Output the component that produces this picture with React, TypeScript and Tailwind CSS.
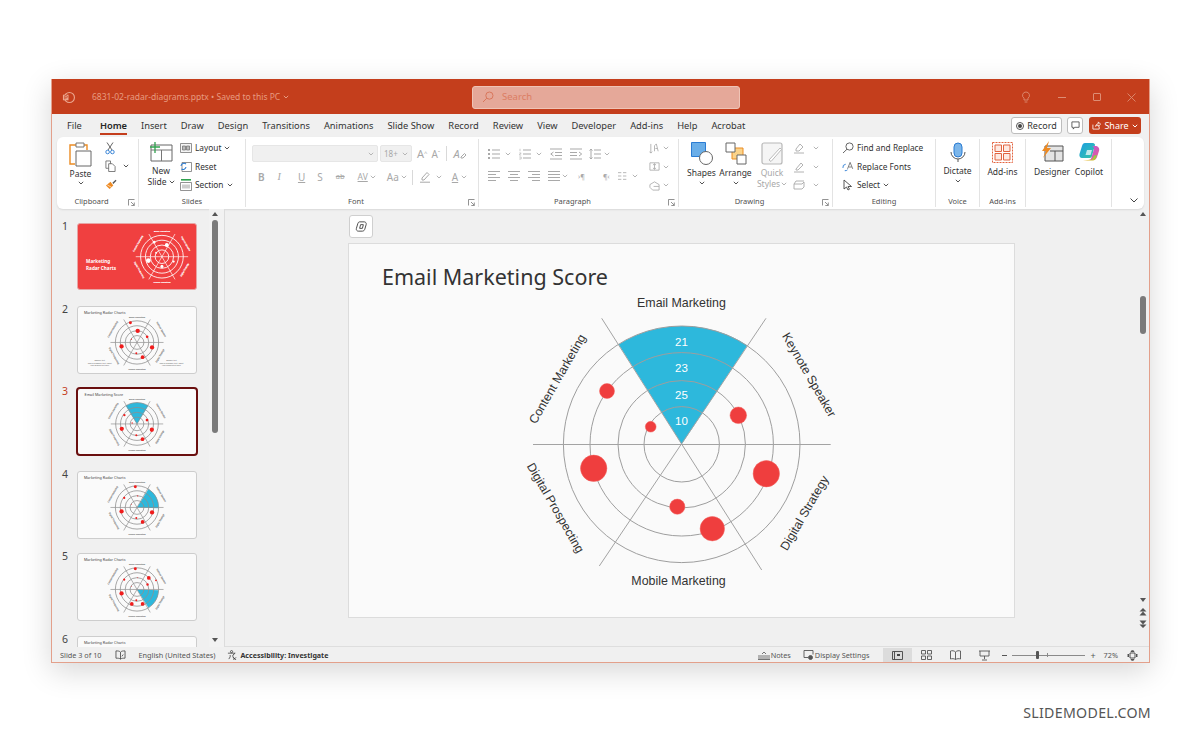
import React from "react";

const UI = "[font-family:'Noto_Sans','Open_Sans',sans-serif]";

function Chev({ className = "", color = "#555" }: { className?: string; color?: string }) {
  return (
    <svg viewBox="0 0 6 4" className={`w-[6px] h-[4px] shrink-0 ${className}`} fill="none" stroke={color} strokeWidth="1">
      <path d="M.8.8 3 3 5.2.8" />
    </svg>
  );
}

const G = "#a9a9a9";

function Lines({ kind, className = "" }: { kind: string; className?: string }) {
  const rows: Record<string, string> = {
    bullets: "M4 2h8M4 6h8M4 10h8",
    numbers: "M4 2h8M4 6h8M4 10h8",
    outdent: "M0 1h12M5 4.5h7M5 7.5h7M0 11h12M3.5 4 .8 6l2.7 2",
    indent: "M0 1h12M0 4.5h7M0 7.5h7M0 11h12M9 4l2.7 2L9 8",
    spacing: "M5 2h7M5 6h7M5 10h7M2 1v10M.6 2.6 2 1l1.4 1.6M.6 9.4 2 11l1.4-1.6",
    left: "M0 1.5h12M0 4.5h8M0 7.5h12M0 10.5h8",
    center: "M0 1.5h12M2 4.5h8M0 7.5h12M2 10.5h8",
    right: "M0 1.5h12M4 4.5h8M0 7.5h12M4 10.5h8",
    justify: "M0 1.5h12M0 4.5h12M0 7.5h12M0 10.5h12",
    cols: "M0 2h4M0 6h4M0 10h4M6 2h4M6 6h4M6 10h4",
  };
  return (
    <svg viewBox="0 0 12 12" className={`w-[12px] h-[12px] shrink-0 ${className}`} fill="none" stroke={G} strokeWidth="1">
      <path d={rows[kind]} />
      {kind === "bullets" && <path d="M0 1h2v2H0zM0 5h2v2H0zM0 9h2v2H0z" fill={G} stroke="none" />}
      {kind === "numbers" && <path d="M1 .8v2.4M.2 5h2L.2 7h2M.2 9h2v2H.2" strokeWidth=".6" />}
    </svg>
  );
}

function Group({ label, w, launcher, children, last }: { label: string; w: string; launcher?: boolean; children: React.ReactNode; last?: boolean }) {
  return (
    <div className={`flex flex-col my-[2px] ${w} ${last ? "" : "border-r border-[#e3e3e3]"}`}>
      <div className="flex-1 flex min-h-0">{children}</div>
      <div className={`h-[10px] flex items-center relative ${launcher ? "pr-[12px]" : ""}`}>
        <span className="flex-1 text-center text-[7.5px] leading-none text-[#505050]">{label}</span>
        {launcher && (
          <svg viewBox="0 0 7 7" className="w-[7px] h-[7px] absolute right-[3px] top-[2px]" fill="none" stroke="#777" strokeWidth=".8">
            <path d="M.5 6.5V.5h6M3 3l3.3 3.3M6.3 3.5v3H3.3" />
          </svg>
        )}
      </div>
    </div>
  );
}

function BigLabel({ children, gray }: { children: React.ReactNode; gray?: boolean }) {
  return <div className={`text-[8.5px] leading-[11px] text-center whitespace-nowrap ${gray ? "text-[#a8a8a8]" : "text-[#333]"}`}>{children}</div>;
}

function SmallRow({ icon, text, chev }: { icon: React.ReactNode; text: string; chev?: boolean }) {
  return (
    <div className="h-[18.5px] flex items-center gap-[3px] text-[8.3px] text-[#333] whitespace-nowrap">
      <span className="w-[12px] h-[12px] flex items-center justify-center shrink-0">{icon}</span>
      <span>{text}</span>
      {chev && <Chev />}
    </div>
  );
}

function Radar({ wedge, dots, mono, title, notes, cut }: { wedge?: "top" | "ur" | "lr"; dots: number[][]; mono?: boolean; title?: string; notes?: boolean; cut?: boolean }) {
  const cx = mono ? 85.7 : 60;
  const cy = mono ? 33.7 : 36;
  const line = mono ? "#fff" : "#8f8f8f";
  const dot = mono ? "#fff" : "#f01c1c";
  const P = (a: number, r: number) => `${cx + r * Math.cos((a * Math.PI) / 180)} ${cy + r * Math.sin((a * Math.PI) / 180)}`;
  const angles = wedge === "top" ? [-122, -58] : wedge === "ur" ? [-58, 2] : [2, 58];
  const labels = cut
    ? []
    : [
        { t: "Email Marketing", x: 0, y: -25, r: 0 },
        { t: "Mobile Marketing", x: 0, y: 27.5, r: 0 },
        { t: "Content Marketing", x: -24, y: -13, r: -60 },
        { t: "Keynote Speaker", x: 24, y: -13, r: 60 },
        { t: "Digital Prospecting", x: -24, y: 14, r: 60 },
        { t: "Digital Strategy", x: 24, y: 14, r: -60 },
      ];
  return (
    <svg viewBox="0 0 120 67" className="w-full h-full block">
      {title && <text x="6" y="7" fontSize="3.8" fill="#444" fontFamily="'Noto Sans',sans-serif">{title}</text>}
      {wedge && <path d={`M${cx} ${cy}L${P(angles[0], 22)}A22 22 0 0 1 ${P(angles[1], 22)}Z`} fill="#2db8dc" />}
      {[7, 12, 17, 22].map((r) => (
        <circle key={r} cx={cx} cy={cy} r={r} fill="none" stroke={line} strokeWidth={mono ? 0.9 : 0.8} />
      ))}
      {[0, 60, 120].map((a) => (
        <path key={a} d={`M${P(a, 27)}L${P(a + 180, 27)}`} stroke={line} strokeWidth=".7" />
      ))}
      {dots.map((d, i) => (
        <circle key={i} cx={cx + d[0]} cy={cy + d[1]} r={d[2]} fill={dot} />
      ))}
      {labels.map((l) => (
        <text key={l.t} transform={`translate(${cx + l.x} ${cy + l.y}) rotate(${l.r})`} textAnchor="middle" fontSize="2.3" fill={mono ? "#fff" : "#666"} stroke={mono ? "#fff" : "#999"} strokeWidth=".15" fontFamily="'Liberation Sans',sans-serif">
          {l.t}
        </text>
      ))}
      {notes && (
        <g fill="#555" fontFamily="'Liberation Sans',sans-serif" textAnchor="middle" fontSize="2">
          <text x="22" y="54.500">Sample text</text>
          <text x="22" y="57.500">This is a sample text. Insert</text>
          <text x="22" y="60">your desired text here</text>
          <text x="95" y="54.500">Sample text</text>
          <text x="95" y="57.500">This is a sample text. Insert</text>
          <text x="95" y="60">your desired text here</text>
        </g>
      )}
      {mono && (
        <g fill="#fff" fontFamily="'Noto Sans',sans-serif" fontWeight="700" fontSize="4.8">
          <text x="7.500" y="40.500">Marketing</text>
          <text x="7.500" y="47">Radar Charts</text>
        </g>
      )}
    </svg>
  );
}

const baseDots = [[-6.7, -20, 1.5], [0.7, -11.7, 2.2], [10.3, -5.7, 1.3], [-5.7, -3.3, 0.6], [-15.7, 4, 2.2], [15.3, 5, 2.2], [-0.7, 11, 1], [5.7, 15, 1.9]];
const d3 = [[-13, -9, 1.2], [10.3, -4, 1.4], [-5, -1, 0.7], [-15.7, 5, 2.2], [15.3, 6, 2.2], [-0.7, 11.7, 1], [5.7, 15.7, 1.9]];
const d4 = [[-1.7, -21, 1.5], [0.7, -11.7, 0.6], [-13, -9.7, 1.1], [-5.7, -3.3, 0.5], [-15.7, 4, 2.2], [15.3, 5, 2.2], [-0.7, 10.7, 1], [5.7, 14.7, 1.9]];
const d5 = [[-1.7, -21, 1.5], [12, -11.7, 1.9], [19.3, -9.3, 0.9], [10.7, -5, 1.2], [0.7, -12, 0.5], [-13, -10, 1.1], [-5.7, -3.3, 0.5], [-15.7, 4, 2.2], [-5.3, 14.7, 1.9], [-0.7, 11, 1], [5.7, 14.7, 1.9]];
const d1 = [[-8, -15, 1.4], [5, -12, 2], [-6, -4, 1], [-14, 4, 2.4], [12, 5, 1.2], [0, 10, 1.6]];

function Thumb({ n, active, red, children }: { n: number; active?: boolean; red?: boolean; children: React.ReactNode }) {
  return (
    <div className="flex h-[67px] shrink-0">
      <div className={`w-[25px] pl-[10px] text-[10.5px] leading-[7px] ${active ? "text-[#c43e1c]" : "text-[#444]"}`}>
        <div>{n}</div>
      </div>
      <div
        className={`overflow-hidden ${active ? "ml-[-1px] w-[122px] h-[69px] mt-[-1px] rounded-[4px] border-2 border-[#6a0f0f] bg-[#fafafa]" : red ? "w-[120px] h-[67px] rounded-[3px] border border-[#e7a5a5] bg-[#f04040]" : "w-[120px] h-[68px] rounded-[3px] border-[1.5px] border-[#cdcdcd] bg-[#fafafa]"}`}
      >
        {children}
      </div>
    </div>
  );
}

function ChartBig() {
  const dots = [
    [607, 391, 7.5], [650.7, 426.7, 5.4], [738.3, 415.3, 8.3], [593.7, 468.3, 13.2],
    [766.3, 473.7, 13.2], [677.3, 506.7, 7.6], [712.3, 528.7, 12.2],
  ];
  const label = "'Liberation Sans',sans-serif";
  return (
    <svg viewBox="515 292 335 300" className="block w-[335px] h-[300px] ml-[166px] shrink-0">
      <path d="M681.7 444.3 618.6 344.5A118.3 118.3 0 0 1 747.4 345.5Z" fill="#2db8dc" />
      {[37.7, 63.7, 91.7, 118.3].map((r) => (
        <circle key={r} cx="681.7" cy="444.3" r={r} fill="none" stroke="#9e9e9e" strokeWidth="1" />
      ))}
      <path d="M533 444.5H830.7M601.7 318.3 761.7 570M766 318.3 599.3 566" stroke="#a3a3a3" strokeWidth="1" />
      {dots.map((d, i) => (
        <circle key={i} cx={d[0]} cy={d[1]} r={d[2]} fill="#ef3e3e" stroke="#f2625f" strokeWidth=".5" />
      ))}
      <g fontFamily={label} fontSize="11.5" fill="#fff" textAnchor="middle">
        <text x="681.5" y="346">21</text>
        <text x="681.5" y="372">23</text>
        <text x="681.5" y="399">25</text>
        <text x="681.5" y="425">10</text>
      </g>
      <g fontFamily={label} fontSize="12.4" fill="#333" textAnchor="middle">
        <text x="681.5" y="307">Email Marketing</text>
        <text x="678.5" y="584.5">Mobile Marketing</text>
        <text transform="translate(561 381) rotate(-60)">Content Marketing</text>
        <text transform="translate(805.5 377) rotate(60)">Keynote Speaker</text>
        <text transform="translate(552 510) rotate(60)" fontSize="12.2">Digital Prospecting</text>
        <text transform="translate(808 515) rotate(-60)">Digital Strategy</text>
      </g>
    </svg>
  );
}

const tabs = ["File", "Home", "Insert", "Draw", "Design", "Transitions", "Animations", "Slide Show", "Record", "Review", "View", "Developer", "Add-ins", "Help", "Acrobat"];

export default function App() {
  return (
    <div className={`w-[1200px] h-[743px] bg-white overflow-hidden pt-[79px] pl-[51px] ${UI}`}>
      <div className="w-[1099px] h-[584px] flex flex-col border border-t-0 border-[#e3a08b] shadow-[0_8px_28px_rgba(0,0,0,0.16)] bg-[#f0f0f0]">
        {/* Title bar */}
        <div className="h-[35px] pt-[1px] bg-[#c43e1c] flex items-center shrink-0">
          <svg viewBox="0 0 14 14" className="w-[13px] h-[13px] ml-[10px]" fill="none" stroke="#eba78f" strokeWidth="1.2">
            <circle cx="8" cy="7" r="5.4" />
            <path d="M1 4h6v6H1z" fill="#eba78f" stroke="none" />
            <path d="M3 9V5h1.6a1.2 1.2 0 0 1 0 2.4H3" stroke="#c43e1c" strokeWidth=".8" />
          </svg>
          <div className="ml-[17px] w-[380px] flex items-center text-[8.5px] text-[#e79b80] whitespace-nowrap gap-[3px]">
            <span>6831-02-radar-diagrams.pptx • Saved to this PC</span>
            <Chev color="#e79b80" />
          </div>
          <div className="w-[268px] h-[23px] rounded-[3px] border border-[#efc4b6] bg-[#e5a899] flex items-center pl-[9px] gap-[8px] text-[9.5px] text-[#dc7d63]">
            <svg viewBox="0 0 12 12" className="w-[12px] h-[12px]" fill="none" stroke="#d9775c" strokeWidth="1">
              <circle cx="7.4" cy="4.6" r="3.6" />
              <path d="M4.8 7.2 1 11" />
            </svg>
            <span>Search</span>
          </div>
          <svg viewBox="0 0 10 12" className="w-[10px] h-[12px] ml-[281px]" fill="none" stroke="#dd8d74" strokeWidth=".9">
            <path d="M5 1a3.4 3.4 0 0 0-2 6.2V9h4V7.2A3.4 3.4 0 0 0 5 1zM3.6 11h2.800" />
          </svg>
          <div className="w-[8px] h-px bg-[#dd8d74] ml-[27px]" />
          <div className="w-[8px] h-[8px] rounded-[1px] border border-[#dd8d74] ml-[27px]" />
          <svg viewBox="0 0 9 9" className="w-[9px] h-[9px] ml-[26px]" stroke="#dd8d74" strokeWidth=".9">
            <path d="M.5.5l8 8M8.5.5l-8 8" />
          </svg>
        </div>

        {/* Tabs */}
        <div className="h-[23px] flex items-center shrink-0 pl-[15px] text-[9.3px] text-[#333] relative">
          <div className="flex gap-[14px] whitespace-nowrap">
            {tabs.map((t) =>
              t === "Home" ? (
                <span key={t} className="relative ml-[4px] font-semibold text-[#262626]">
                  {t}
                  <span className="absolute left-0 right-0 bottom-[-3px] h-[2px] bg-[#c43e1c]" />
                </span>
              ) : (
                <span key={t}>{t}</span>
              ),
            )}
          </div>
          <div className="ml-auto flex items-center mr-[8px]">
            <div className="w-[51px] h-[17px] rounded-[3px] border border-[#bdbdbd] bg-white flex items-center justify-center gap-[3px] text-[9px]">
              <span className="w-[8px] h-[8px] rounded-full border border-[#555] flex items-center justify-center">
                <span className="w-[4px] h-[4px] rounded-full bg-[#444]" />
              </span>
              Record
            </div>
            <div className="w-[16px] h-[17px] ml-[5px] rounded-[3px] border border-[#bdbdbd] bg-white flex items-center justify-center">
              <svg viewBox="0 0 10 10" className="w-[9px] h-[9px]" fill="none" stroke="#444" strokeWidth=".9">
                <path d="M1 1h8v6H4L2.5 9V7H1z" />
              </svg>
            </div>
            <div className="w-[52px] h-[17px] ml-[6px] rounded-[3px] bg-[#c43e1c] flex items-center justify-center gap-[3px] text-[9px] text-white">
              <svg viewBox="0 0 10 10" className="w-[9px] h-[9px]" fill="none" stroke="#fff" strokeWidth=".9">
                <path d="M1 4v5h7V6M4 6c0-2 2-3 3-3V1l2.6 2.6L7 6V4.5C6 4.5 4.8 5 4 6z" />
              </svg>
              Share
              <Chev color="#fff" />
            </div>
          </div>
        </div>

        {/* Ribbon */}
        <div className="h-[72px] mx-[5px] rounded-[6px] bg-white flex shrink-0 shadow-[0_1px_2px_rgba(0,0,0,0.1)]">
          <Group label="Clipboard" w="w-[82px]" launcher>
            <div className="ml-[11px] w-[25px] flex flex-col items-center pt-[3px]">
              <svg viewBox="0 0 25 25" className="w-[25px] h-[25px]" fill="none">
                <path d="M10 3H2v19h5" stroke="#eb8c23" strokeWidth="1.4" />
                <path d="M14 3h5v5" stroke="#eb8c23" strokeWidth="1.4" />
                <path d="M8 1h8v4H8z" fill="#fff" stroke="#777" />
                <path d="M8 9h15v15H8z" fill="#fff" stroke="#666" />
              </svg>
              <div className="mt-[1px]"><BigLabel>Paste</BigLabel></div>
              <Chev className="mt-[2px]" />
            </div>
            <div className="ml-[12px] flex flex-col">
              <div className="h-[18px] flex items-center">
                <svg viewBox="0 0 10 13" className="w-[10px] h-[13px]" fill="none" stroke="#555" strokeWidth=".9">
                  <path d="M2 .5 7 8M8 .5 3 8" />
                  <circle cx="2.6" cy="10" r="1.8" stroke="#2b7cd3" />
                  <circle cx="7.4" cy="10" r="1.8" stroke="#2b7cd3" />
                </svg>
              </div>
              <div className="h-[18px] flex items-center">
                <svg viewBox="0 0 12 13" className="w-[11px] h-[12px]" fill="none" stroke="#666" strokeWidth=".9">
                  <path d="M1 1h5v8H1z" />
                  <path d="M4 4h4l3 3v5.5H4z" fill="#fff" />
                </svg>
                <Chev className="ml-[7px]" />
              </div>
              <div className="h-[18px] flex items-center">
                <svg viewBox="0 0 13 12" className="w-[12px] h-[11px]">
                  <path d="M1 7 6 3l3 4-4 4z" fill="#ee8a22" />
                  <path d="M8 4l3.5-3.2 1 1L9 5.5z" fill="#555" />
                  <path d="M2.5 6.5 7 9" stroke="#fff" strokeWidth=".7" />
                </svg>
              </div>
            </div>
          </Group>

          <Group label="Slides" w="w-[107px]">
            <div className="ml-[10px] w-[24px] flex flex-col items-center pt-[3px]">
              <svg viewBox="0 0 23 20" className="w-[23px] h-[20px]" fill="none">
                <path d="M1 3h21v16H1z" stroke="#666" />
                <path d="M1 8h21M11.5 8v11" stroke="#777" />
                <path d="M5 0v11M0 5h10" stroke="#30a14e" strokeWidth="1.3" />
              </svg>
              <div className="mt-[3px]"><BigLabel>New</BigLabel></div>
              <div className="flex items-center gap-[2px]"><BigLabel>Slide</BigLabel><Chev /></div>
            </div>
            <div className="ml-[7px] flex flex-col">
              <SmallRow
                text="Layout"
                chev
                icon={
                  <svg viewBox="0 0 12 10" className="w-[12px] h-[10px]" fill="#f5f5f5" stroke="#777" strokeWidth=".8">
                    <path d="M.5.5h11v9H.5z" />
                    <path d="M2.5 3h3v4h-3zM6.5 3h3v4h-3z" fill="#bbb" />
                  </svg>
                }
              />
              <SmallRow
                text="Reset"
                icon={
                  <svg viewBox="0 0 12 11" className="w-[12px] h-[11px]" fill="none" stroke="#777" strokeWidth=".8">
                    <path d="M2 1.5h9.5v9H2z" />
                    <path d="M1 5a3 3 0 0 1 5-2M6 6a3 3 0 0 1-4.5 2" stroke="#2b7cd3" strokeWidth="1.1" />
                  </svg>
                }
              />
              <SmallRow
                text="Section"
                chev
                icon={
                  <svg viewBox="0 0 12 12" className="w-[12px] h-[12px]" fill="none" stroke="#777" strokeWidth=".8">
                    <path d="M1 .8h10" stroke="#30a14e" strokeWidth="1.6" />
                    <path d="M.5 3.5h11v8H.5z" />
                    <path d="M2 5.5h8v4H2z" fill="#ccc" stroke="none" />
                  </svg>
                }
              />
            </div>
          </Group>

          <Group label="Font" w="w-[233px]" launcher>
            <div className="pt-[6px] pl-[6px] flex flex-col text-[#a8a8a8]">
              <div className="flex items-center h-[17px]">
                <div className="w-[126px] h-[17px] rounded-[2px] bg-[#f0f0f0] border border-[#e6e6e6] flex items-center justify-end pr-[3px]"><Chev color="#b5b5b5" /></div>
                <div className="w-[32px] h-[17px] ml-[2px] rounded-[2px] bg-[#f0f0f0] border border-[#e6e6e6] flex items-center justify-between px-[3px] text-[8px]">18+<Chev color="#b5b5b5" /></div>
                <span className="ml-[5px] text-[11px] leading-none">A<sup className="text-[6px]">^</sup></span>
                <span className="ml-[4px] text-[10px] leading-none">A<sup className="text-[6px]">ˇ</sup></span>
                <div className="w-px h-[15px] bg-[#d9d9d9] ml-[6px]" />
                <span className="ml-[6px] text-[11px] italic leading-none">A</span>
                <svg viewBox="0 0 7 7" className="w-[7px] h-[7px] mt-[3px]" fill="none" stroke={G}><path d="M1 5 4.500 1.500 6 3 3 6H1z" /></svg>
              </div>
              <div className="flex items-center h-[20px] mt-[5px] text-[10px] leading-none">
                <span className="ml-[6px] font-semibold">B</span>
                <span className="ml-[13px] italic [font-family:'Liberation_Serif',serif]">I</span>
                <span className="ml-[17px] underline">U</span>
                <span className="ml-[12px]">S</span>
                <span className="ml-[13px] text-[7.5px] line-through">ab</span>
                <span className="ml-[13px] text-[8.5px] underline">AV</span>
                <Chev className="ml-[2px]" color="#b5b5b5" />
                <span className="ml-[11px]">Aa</span>
                <Chev className="ml-[2px]" color="#b5b5b5" />
                <div className="w-px h-[15px] bg-[#d9d9d9] ml-[5px]" />
                <svg viewBox="0 0 12 12" className="w-[12px] h-[12px] ml-[6px]" fill="none" stroke={G}>
                  <path d="M3 7 8 1.5l2 2L5 9H3zM1 11.2h10" />
                </svg>
                <Chev className="ml-[5px]" color="#b5b5b5" />
                <span className="ml-[10px] underline">A</span>
                <Chev className="ml-[3px]" color="#b5b5b5" />
              </div>
            </div>
          </Group>

          <Group label="Paragraph" w="w-[200px]" launcher>
            <div className="w-[167px] pt-[9px] flex flex-col">
              <div className="flex items-center h-[12px]">
                <Lines kind="bullets" className="ml-[9px]" /><Chev className="ml-[5px]" color="#b5b5b5" />
                <Lines kind="numbers" className="ml-[8px]" /><Chev className="ml-[5px]" color="#b5b5b5" />
                <Lines kind="outdent" className="ml-[8px]" />
                <Lines kind="indent" className="ml-[8px]" />
                <Lines kind="spacing" className="ml-[7px]" /><Chev className="ml-[3px]" color="#b5b5b5" />
              </div>
              <div className="flex items-center h-[12px] mt-[10px]">
                <Lines kind="left" className="ml-[9px]" />
                <Lines kind="center" className="ml-[8px]" />
                <Lines kind="right" className="ml-[8px]" />
                <Lines kind="justify" className="ml-[8px]" /><Chev className="ml-[2px]" color="#b5b5b5" />
                <span className="ml-[10px] w-[10px] text-[7px] leading-none text-[#a8a8a8]">›¶</span>
                <span className="ml-[15px] w-[10px] text-[7px] leading-none text-[#a8a8a8]">¶‹</span>
                <Lines kind="cols" className="ml-[5px] !w-[10px]" /><Chev className="ml-[4px]" color="#b5b5b5" />
              </div>
            </div>
            <div className="ml-[3px] flex flex-col">
              {["M2 1v10M.5 9.4 2 11l1.500-1.600M6 9V3l2-2 2 8M7 6h2", "M1 2h10v8H1zM6 3v6M4.300 4.500 6 3l1.700 1.500M4.300 7.500 6 9l1.700-1.500", "M1 5l5-3 5 3v6H4L1 8zM5 7h6"].map((d) => (
                <div key={d} className="h-[18.5px] flex items-center gap-[3px]">
                  <svg viewBox="0 0 12 12" className="w-[11px] h-[11px]" fill="none" stroke={G} strokeWidth=".9"><path d={d} /></svg>
                  <Chev color="#b5b5b5" />
                </div>
              ))}
            </div>
          </Group>

          <Group label="Drawing" w="w-[154px]" launcher>
            <div className="ml-[8px] w-[29px] flex flex-col items-center pt-[3px]">
              <svg viewBox="0 0 22 23" className="w-[22px] h-[23px]">
                <path d="M.5.500h14v14H.5z" fill="#6aaee8" stroke="#2b7cd3" />
                <circle cx="15" cy="16" r="6.500" fill="#fff" stroke="#666" />
              </svg>
              <div className="mt-[2px]"><BigLabel>Shapes</BigLabel></div>
              <Chev className="mt-[3px]" />
            </div>
            <div className="ml-[2px] w-[35px] flex flex-col items-center pt-[3px]">
              <svg viewBox="0 0 22 23" className="w-[22px] h-[23px]">
                <path d="M7 6h11v11H7z" fill="#fbd38a" stroke="#eb8c23" />
                <path d="M1 1h9v9H1z" fill="#fff" stroke="#666" />
                <path d="M12 13h9v9h-9z" fill="#fff" stroke="#666" />
              </svg>
              <div className="mt-[2px]"><BigLabel>Arrange</BigLabel></div>
              <Chev className="mt-[3px]" />
            </div>
            <div className="ml-[4px] w-[30px] flex flex-col items-center pt-[3px]">
              <svg viewBox="0 0 22 23" className="w-[22px] h-[23px]" fill="none">
                <rect x="1" y="1" width="20" height="21" rx="2" fill="#f5f5f5" stroke="#b8b8b8" strokeWidth="1.200" />
                <path d="M8 18 19 6l1.500 1.500L10 19.500z" fill="#fff" stroke="#bbb" />
              </svg>
              <div className="mt-[2px]"><BigLabel gray>Quick</BigLabel></div>
              <div className="flex items-center gap-[1px]"><BigLabel gray>Styles</BigLabel><Chev color="#b5b5b5" /></div>
            </div>
            <div className="ml-[6px] flex flex-col">
              {["M3 7 7 2l3 3-4 4H3zM1 11h10", "M3 8 8 2l2 2-5 5H3zM1 11h10", "M1 5h8l2-2v5l-2 2H1zM1 5l2-3h8"].map((d, i) => (
                <div key={i} className="h-[18.500px] flex items-center gap-[8px]">
                  <svg viewBox="0 0 12 12" className="w-[12px] h-[12px]" fill="none" stroke={G} strokeWidth=".9"><path d={d} /></svg>
                  <Chev color="#b5b5b5" />
                </div>
              ))}
            </div>
          </Group>

          <Group label="Editing" w="w-[103px]">
            <div className="ml-[9px] flex flex-col">
              <SmallRow
                text="Find and Replace"
                icon={
                  <svg viewBox="0 0 12 12" className="w-[12px] h-[12px]" fill="none" stroke="#555" strokeWidth=".9">
                    <circle cx="7.500" cy="4.500" r="3.600" /><path d="M5 7.200 1 11" />
                  </svg>
                }
              />
              <SmallRow
                text="Replace Fonts"
                icon={
                  <svg viewBox="0 0 13 12" className="w-[12px] h-[12px]" fill="none" stroke="#2b7cd3" strokeWidth="1">
                    <path d="M1 7a3.500 3.500 0 0 1 3-4M6 9a3.500 3.500 0 0 1-3 1" />
                    <path d="M6 8l2.800-7 2.800 7M7.200 6h3.200" stroke="#555" strokeWidth=".8" />
                  </svg>
                }
              />
              <SmallRow
                text="Select"
                chev
                icon={
                  <svg viewBox="0 0 10 12" className="w-[10px] h-[12px]" fill="#fff" stroke="#444" strokeWidth=".9">
                    <path d="M1 1v9l2.500-2 1.500 3 1.500-.8L5 7.500h3.500z" />
                  </svg>
                }
              />
            </div>
          </Group>

          <Group label="Voice" w="w-[44px]">
            <div className="w-full flex flex-col items-center pt-[3px]">
              <svg viewBox="0 0 16 21" className="w-[16px] h-[21px]" fill="none">
                <rect x="4" y="1" width="8" height="14" rx="4" fill="#7cb6ea" stroke="#2b7cd3" />
                <path d="M1 10a7 7 0 0 0 14 0M8 17v3" stroke="#555" />
              </svg>
              <div className="mt-[2px]"><BigLabel>Dictate</BigLabel></div>
              <Chev className="mt-[3px]" />
            </div>
          </Group>

          <Group label="Add-ins" w="w-[46px]">
            <div className="w-full flex flex-col items-center pt-[3px]">
              <svg viewBox="0 0 21 21" className="w-[21px] h-[21px]" fill="#fde9e2" stroke="#e2633f" strokeWidth="1">
                <path d="M.5.500h20v20H.5z" fill="none" strokeDasharray="2 1" />
                <path d="M3 3h6.500v6.500H3zM11.500 3H18v6.500h-6.500zM3 11.500h6.500V18H3zM11.500 11.500H18V18h-6.500z" />
              </svg>
              <div className="mt-[3px]"><BigLabel>Add-ins</BigLabel></div>
            </div>
          </Group>

          <Group label="" w="w-[86px]">
            <div className="ml-[10px] w-[32px] flex flex-col items-center pt-[2px]">
              <svg viewBox="0 0 23 22" className="w-[23px] h-[22px]" fill="none">
                <path d="M4 5h18v15H4z" fill="#e4e4e4" stroke="#555" />
                <path d="M9 10h13M14 10v10" stroke="#555" />
                <path d="M8 0 1 10h4l-3 7 8-10H6z" fill="#ee8a22" />
              </svg>
              <div className="mt-[3px]"><BigLabel>Designer</BigLabel></div>
            </div>
            <div className="ml-[5px] w-[32px] flex flex-col items-center pt-[2px]">
              <svg viewBox="0 0 22 22" className="w-[22px] h-[22px]">
                <defs>
                  <linearGradient id="cp1" x1="0" y1="0" x2="1" y2="1"><stop offset="0" stopColor="#1b9de2" /><stop offset="1" stopColor="#37c6a5" /></linearGradient>
                  <linearGradient id="cp2" x1="0" y1="0" x2="1" y2="1"><stop offset="0" stopColor="#b05ee0" /><stop offset="1" stopColor="#f0558f" /></linearGradient>
                  <linearGradient id="cp3" x1="0" y1="1" x2="1" y2="0"><stop offset="0" stopColor="#f5b324" /><stop offset="1" stopColor="#7fd14b" /></linearGradient>
                </defs>
                <path d="M7 2h8c1 0 2 1 2 2l-3 11c-.4 1.500-1.500 2-2.500 2H4c-2 0-3-2-2.500-4L4 5c.5-2 1.500-3 3-3z" fill="url(#cp1)" />
                <path d="M10 5h7c3 0 5 2 4 5l-2 6c-.7 2-2 3-4 3h-4c1 0 2-1 2.300-2L16 8c.3-1.500-1-3-2.500-3z" fill="url(#cp2)" />
                <path d="M5 19.500h10c1.500 0 2.500-1 3-2.500l1-3-3 .5-2 4z" fill="url(#cp3)" />
                <path d="M9 9h5l-1.500 5h-5z" fill="#fff" opacity=".7" />
              </svg>
              <div className="mt-[3px]"><BigLabel>Copilot</BigLabel></div>
            </div>
          </Group>

          <div className="flex-1 flex items-end justify-end pr-[6px] pb-[6px]">
            <svg viewBox="0 0 8 5" className="w-[8px] h-[5px]" fill="none" stroke="#444" strokeWidth="1"><path d="M.5.500 4 4 7.500.500" /></svg>
          </div>
        </div>

        {/* Body */}
        <div className="flex-1 flex min-h-0">
          {/* Thumbnails */}
          <div className="w-[173px] shrink-0 border-r border-[#dcdcdc] flex overflow-hidden">
            <div className="w-[158px] pt-[14px] flex flex-col gap-[15.500px] overflow-hidden">
              <Thumb n={1} red><Radar mono dots={d1} /></Thumb>
              <Thumb n={2}><Radar title="Marketing Radar Charts" dots={baseDots} notes /></Thumb>
              <Thumb n={3} active><Radar wedge="top" title="Email Marketing Score" dots={d3} /></Thumb>
              <Thumb n={4}><Radar wedge="ur" title="Marketing Radar Charts" dots={d4} /></Thumb>
              <Thumb n={5}><Radar wedge="lr" title="Marketing Radar Charts" dots={d5} /></Thumb>
              <Thumb n={6}><Radar title="Marketing Radar Charts" dots={d4} cut /></Thumb>
            </div>
            <div className="w-[15px] flex flex-col items-center pr-[3px] bg-[#f2f2f2]">
              <div className="mt-[3px] w-0 h-0 border-x-[3.500px] border-x-transparent border-b-[4px] border-b-[#555]" />
              <div className="w-[6px] h-[213px] mt-[4px] rounded-full bg-[#7a7a7a]" />
              <div className="mt-auto mb-[5px] w-0 h-0 border-x-[3.500px] border-x-transparent border-t-[4px] border-t-[#555]" />
            </div>
          </div>

          {/* Canvas */}
          <div className="flex-1 min-w-0 flex border-b border-[#dedede]">
            <div className="flex-1 pl-[123px] pt-[6px] flex flex-col">
              <div className="w-[24px] h-[23px] ml-[1px] rounded-[3px] border border-[#cfcfcf] bg-white flex items-center justify-center">
                <svg viewBox="0 0 14 14" className="w-[13px] h-[13px]" fill="none" stroke="#444" strokeWidth="1">
                  <path d="M5 2h5c1.500 0 2.500 1.500 2 3l-1.500 5c-.4 1.200-1.300 2-2.500 2H3.500C2 12 1 10.500 1.500 9L3 4c.3-1.200 1-2 2-2z" />
                  <path d="M6 5h3L8 9H5z" />
                </svg>
              </div>
              <div className="w-[667px] h-[375px] mt-[5px] border border-[#dcdcdc] bg-[#fafafa] flex flex-col overflow-hidden">
                <div className="pl-[33px] pt-[18px] h-[48px] shrink-0 text-[21.500px] leading-[30px] text-[#333] whitespace-nowrap">Email Marketing Score</div>
                <ChartBig />
              </div>
            </div>
            <div className="w-[11px] shrink-0 pr-[1px] flex flex-col items-center">
              <div className="mt-[3px] w-0 h-0 border-x-[3.500px] border-x-transparent border-b-[4px] border-b-[#555]" />
              <div className="w-[6px] h-[38px] mt-[80px] rounded-full bg-[#7a7a7a]" />
              <div className="mt-auto w-0 h-0 border-x-[3.500px] border-x-transparent border-t-[4px] border-t-[#555]" />
              <svg viewBox="0 0 8 8" className="w-[8px] h-[8px] mt-[6px]" fill="#555"><path d="M4 0 7.500 3.500H.5zM4 3.500 7.500 7.500H.5z" /></svg>
              <svg viewBox="0 0 8 8" className="w-[8px] h-[8px] mt-[4px] mb-[18px]" fill="#555"><path d="M4 8 .5 4.500h7zM4 4.500.5.500h7z" /></svg>
            </div>
          </div>
        </div>

        {/* Status bar */}
        <div className="h-[15px] pt-[1px] shrink-0 flex items-center text-[7.300px] text-[#555] whitespace-nowrap">
          <span className="ml-[8px]">Slide 3 of 10</span>
          <svg viewBox="0 0 12 11" className="w-[11px] h-[10px] ml-[13px]" fill="none" stroke="#444" strokeWidth=".9"><path d="M1 1c2 0 4 0 5 1.500C7 1 9 1 11 1v8c-2 0-4 0-5 1-1-1-3-1-5-1zM6 2.500V10M7.500 7 9 5" /></svg>
          <span className="ml-[13px]">English (United States)</span>
          <svg viewBox="0 0 11 11" className="w-[10px] h-[10px] ml-[12px]" fill="none" stroke="#333" strokeWidth=".8"><circle cx="5" cy="1.800" r="1.200" /><path d="M1 3.500h8L6.500 5.500v2L8 10M3.500 5.500v2L2 10M7 8l3 3M10 8l-3 3" /></svg>
          <span className="ml-[3px] font-bold text-[7.100px] text-[#333]">Accessibility: Investigate</span>
          <div className="ml-auto flex items-center h-full">
            <svg viewBox="0 0 12 9" className="w-[12px] h-[9px]" fill="none" stroke="#555" strokeWidth=".8"><path d="M0 5h12M0 7h12M0 8.500h12M4 3l2-2 2 2" /></svg>
            <span className="ml-[1px]">Notes</span>
            <svg viewBox="0 0 11 10" className="w-[11px] h-[10px] ml-[12px]" fill="none" stroke="#555" strokeWidth=".9"><path d="M5 7.500H1v-7h9v4" /><circle cx="7.500" cy="7.500" r="2" fill="#555" /></svg>
            <span className="ml-[1px]">Display Settings</span>
            <div className="w-[29px] h-full ml-[14px] bg-[#dcdcdc] flex items-center justify-center">
              <svg viewBox="0 0 11 9" className="w-[11px] h-[9px]" fill="none" stroke="#444" strokeWidth=".9"><path d="M.5.500h10v8H.5zM2.500.500v8" /><path d="M5 3h3v2H5z" fill="#444" stroke="none" /></svg>
            </div>
            <svg viewBox="0 0 11 10" className="w-[11px] h-[10px] ml-[9px]" fill="none" stroke="#555" strokeWidth=".9"><path d="M.5.500h4v3.500h-4zM6.500.500h4v3.500h-4zM.5 6h4v3.500h-4zM6.500 6h4v3.500h-4z" /></svg>
            <svg viewBox="0 0 11 10" className="w-[11px] h-[10px] ml-[18px]" fill="none" stroke="#555" strokeWidth=".9"><path d="M5.500 2C4 .5 2 .5.500 1v8c1.500-.5 3.500-.5 5 .5 1.500-1 3.500-1 5-.5V1C9 .5 7 .5 5.500 2zM5.500 2v7.500" /></svg>
            <svg viewBox="0 0 11 11" className="w-[11px] h-[11px] ml-[18px]" fill="none" stroke="#555" strokeWidth=".9"><path d="M0 1h11M1 1v5h9V1M5.500 6v3M3 10h5" /></svg>
            <span className="ml-[12px] w-[5px] h-px bg-[#555]" />
            <div className="ml-[5px] w-[73px] h-px bg-[#8a8a8a] flex items-center">
              <div className="ml-[24px] w-[3px] h-[8px] rounded-[1px] bg-[#555]" />
              <div className="ml-[8px] w-px h-[4px] bg-[#8a8a8a]" />
            </div>
            <span className="ml-[5px] text-[9px] leading-none">+</span>
            <span className="ml-[8px]">72%</span>
            <svg viewBox="0 0 11 11" className="w-[11px] h-[11px] ml-[9px] mr-[11px]" fill="none" stroke="#444" strokeWidth=".9"><path d="M3 3h5v5H3zM5.500 0 4 1.500h3zM5.500 11 4 9.500h3zM0 5.500 1.500 4v3zM11 5.500 9.500 4v3z" /></svg>
          </div>
        </div>
      </div>
      <div className="w-[1100px] mt-[41px] text-right text-[14.200px] leading-[18px] tracking-[0.3px] text-[#555]">SLIDEMODEL.COM</div>
    </div>
  );
}
